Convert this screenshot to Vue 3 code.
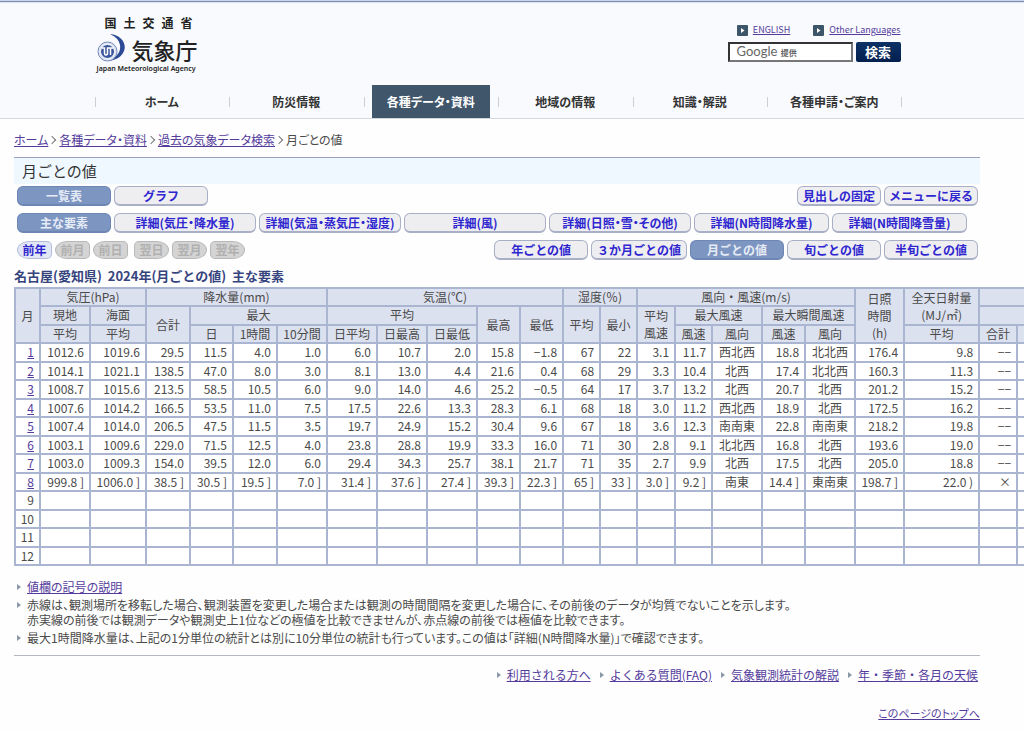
<script setup>
const nav = ['ホーム', '防災情報', '各種データ・資料', '地域の情報', '知識・解説', '各種申請・ご案内']

const elements = [
  { label: '主な要素', size: 'short', on: true },
  { label: '詳細(気圧・降水量)', size: 'long' },
  { label: '詳細(気温・蒸気圧・湿度)', size: 'long' },
  { label: '詳細(風)', size: 'long' },
  { label: '詳細(日照・雪・その他)', size: 'long' },
  { label: '詳細(N時間降水量)', size: 'mid' },
  { label: '詳細(N時間降雪量)', size: 'mid' },
]

const periods = [
  { label: '年ごとの値', size: 'short' },
  { label: '３か月ごとの値', size: 'fit' },
  { label: '月ごとの値', size: 'short', on: true },
  { label: '旬ごとの値', size: 'short' },
  { label: '半旬ごとの値', size: 'short' },
]

const widths = [25, 50, 56, 44, 43, 44, 50, 50, 50, 50, 43, 43, 37, 37, 38, 37, 50, 43, 50, 49, 75, 38, 50]

const rows = [
  ['1012.6', '1019.6', '29.5', '11.5', '4.0', '1.0', '6.0', '10.7', '2.0', '15.8', '−1.8', '67', '22', '3.1', '11.7', '西北西', '18.8', '北北西', '176.4', '9.8', '−−', ''],
  ['1014.1', '1021.1', '138.5', '47.0', '8.0', '3.0', '8.1', '13.0', '4.4', '21.6', '0.4', '68', '29', '3.3', '10.4', '北西', '17.4', '北北西', '160.3', '11.3', '−−', ''],
  ['1008.7', '1015.6', '213.5', '58.5', '10.5', '6.0', '9.0', '14.0', '4.6', '25.2', '−0.5', '64', '17', '3.7', '13.2', '北西', '20.7', '北西', '201.2', '15.2', '−−', ''],
  ['1007.6', '1014.2', '166.5', '53.5', '11.0', '7.5', '17.5', '22.6', '13.3', '28.3', '6.1', '68', '18', '3.0', '11.2', '西北西', '18.9', '北西', '172.5', '16.2', '−−', ''],
  ['1007.4', '1014.0', '206.5', '47.5', '11.5', '3.5', '19.7', '24.9', '15.2', '30.4', '9.6', '67', '18', '3.6', '12.3', '南南東', '22.8', '南南東', '218.2', '19.8', '−−', ''],
  ['1003.1', '1009.6', '229.0', '71.5', '12.5', '4.0', '23.8', '28.8', '19.9', '33.3', '16.0', '71', '30', '2.8', '9.1', '北北西', '16.8', '北西', '193.6', '19.0', '−−', ''],
  ['1003.0', '1009.3', '154.0', '39.5', '12.0', '6.0', '29.4', '34.3', '25.7', '38.1', '21.7', '71', '35', '2.7', '9.9', '北西', '17.5', '北西', '205.0', '18.8', '−−', ''],
  ['999.8 ]', '1006.0 ]', '38.5 ]', '30.5 ]', '19.5 ]', '7.0 ]', '31.4 ]', '37.6 ]', '27.4 ]', '39.3 ]', '22.3 ]', '65 ]', '33 ]', '3.0 ]', '9.2 ]', '南東', '14.4 ]', '東南東', '198.7 ]', '22.0 )', '×', ''],
  Array(22).fill(''),
  Array(22).fill(''),
  Array(22).fill(''),
  Array(22).fill(''),
]

const footerLinks = ['利用される方へ', 'よくある質問(FAQ)', '気象観測統計の解説', '年・季節・各月の天候']
</script>

<template>
  <div class="page">
    <header class="header">
      <div class="header-inner">
        <div class="masthead">
          <a class="logo" href="#">
            <span class="ministry"><span>国</span><span>土</span><span>交</span><span>通</span><span>省</span></span>
            <span class="agency">
              <svg class="emblem" viewBox="0 0 30 28" aria-hidden="true">
                <path d="M13 0C25 1 31 11 26 19C23 24 18 26 12 27C20 23 24 18 23 11C22 6 19 3 13 0Z" fill="#2c4a96" />
                <circle cx="10.500" cy="17.500" r="9.500" fill="#dfe6f3" stroke="#7487b8" stroke-width="1" />
                <circle cx="10.500" cy="17.500" r="7" fill="#3a559d" stroke="#fff" stroke-width="1" />
                <path d="M4.500 14H7.500V19C7.500 21.500 10.500 21.500 10.500 19V14H13.500V21M13.500 14H16.500" fill="none" stroke="#fff" stroke-width="1.500" />
              </svg>
              <span>気象庁</span>
            </span>
            <span class="english">Japan Meteorological Agency</span>
          </a>
          <div class="tools">
            <div class="langs">
              <a v-for="l in ['ENGLISH', 'Other Languages']" :key="l" href="#">
                <svg viewBox="0 0 11 11" aria-hidden="true">
                  <rect width="11" height="11" rx="1" fill="#3d5568" />
                  <path d="M4 3L7.500 5.500L4 8Z" fill="#fff" />
                </svg>
                <span>{{ l }}</span>
              </a>
            </div>
            <form class="search" @submit.prevent>
              <span class="field">
                <input id="q" type="text" />
                <label for="q">Google <small>提供</small></label>
              </span>
              <button type="submit">検索</button>
            </form>
          </div>
        </div>
        <nav class="nav">
          <div v-for="(n, i) in nav" :key="n" class="nav-item">
            <a href="#" :class="{ current: i === 2 }">{{ n }}</a>
          </div>
        </nav>
      </div>
    </header>

    <main class="main">
      <div class="crumbs">
        <a href="#">ホーム</a><i></i><a href="#">各種データ・資料</a><i></i><a href="#">過去の気象データ検索</a><i></i><span>月ごとの値</span>
      </div>
      <h1>月ごとの値</h1>

      <div class="controls">
        <div class="bar">
          <div class="group">
            <button class="btn short on">一覧表</button>
            <button class="btn short">グラフ</button>
          </div>
          <div class="group">
            <button class="btn fit">見出しの固定</button>
            <button class="btn short">メニューに戻る</button>
          </div>
        </div>
        <div class="bar">
          <div class="group">
            <button v-for="e in elements" :key="e.label" class="btn" :class="[e.size, { on: e.on }]">{{ e.label }}</button>
          </div>
        </div>
        <div class="bar">
          <div class="steps">
            <div class="group">
              <button class="step prev">前年</button>
              <button class="step prev" disabled>前月</button>
              <button class="step prev" disabled>前日</button>
            </div>
            <div class="group">
              <button class="step next" disabled>翌日</button>
              <button class="step next" disabled>翌月</button>
              <button class="step next" disabled>翌年</button>
            </div>
          </div>
          <div class="group">
            <button v-for="p in periods" :key="p.label" class="btn" :class="[p.size, { on: p.on }]">{{ p.label }}</button>
          </div>
        </div>
      </div>

      <h2>名古屋(愛知県)&nbsp; 2024年(月ごとの値)&nbsp; 主な要素</h2>
      <div class="table-wrap">
        <table>
          <colgroup>
            <col v-for="(w, i) in widths" :key="i" :style="{ width: w + 'px' }" />
          </colgroup>
          <thead>
            <tr>
              <th rowspan="3">月</th>
              <th colspan="2">気圧(hPa)</th>
              <th colspan="4">降水量(mm)</th>
              <th colspan="5">気温(℃)</th>
              <th colspan="2">湿度(％)</th>
              <th colspan="5">風向・風速(m/s)</th>
              <th rowspan="3">日照<br />時間<br />(h)</th>
              <th rowspan="2">全天日射量<br />(MJ/㎡)</th>
              <th colspan="2"></th>
            </tr>
            <tr>
              <th>現地</th>
              <th>海面</th>
              <th rowspan="2">合計</th>
              <th colspan="3">最大</th>
              <th colspan="3">平均</th>
              <th rowspan="2">最高</th>
              <th rowspan="2">最低</th>
              <th rowspan="2">平均</th>
              <th rowspan="2">最小</th>
              <th rowspan="2">平均<br />風速</th>
              <th colspan="2">最大風速</th>
              <th colspan="2">最大瞬間風速</th>
              <th colspan="2"></th>
            </tr>
            <tr>
              <th>平均</th>
              <th>平均</th>
              <th>日</th>
              <th>1時間</th>
              <th>10分間</th>
              <th>日平均</th>
              <th>日最高</th>
              <th>日最低</th>
              <th>風速</th>
              <th>風向</th>
              <th>風速</th>
              <th>風向</th>
              <th>平均</th>
              <th>合計</th>
              <th></th>
            </tr>
          </thead>
          <tbody>
            <tr v-for="(r, i) in rows" :key="i">
              <td><a v-if="i < 8" href="#">{{ i + 1 }}</a><template v-else>{{ i + 1 }}</template></td>
              <td v-for="(c, j) in r" :key="j" :class="{ dir: j === 15 || j === 17 }">{{ c }}</td>
            </tr>
          </tbody>
        </table>
      </div>

      <ul class="notes">
        <li><a href="#">値欄の記号の説明</a></li>
        <li>赤線は、観測場所を移転した場合、観測装置を変更した場合または観測の時間間隔を変更した場合に、その前後のデータが均質でないことを示します。<br />赤実線の前後では観測データや観測史上1位などの極値を比較できませんが、赤点線の前後では極値を比較できます。</li>
        <li>最大1時間降水量は、上記の1分単位の統計とは別に10分単位の統計も行っています。この値は「詳細(N時間降水量)」で確認できます。</li>
      </ul>

      <ul class="links">
        <li v-for="l in footerLinks" :key="l"><a href="#">{{ l }}</a></li>
      </ul>
      <p class="top"><a href="#">このページのトップへ</a></p>
    </main>
  </div>
</template>

<style>
body {
  margin: 0;
  background: #fefefe;
}
</style>

<style scoped>
* {
  box-sizing: border-box;
}
.page {
  font-family: "Noto Sans CJK JP", "Liberation Sans", sans-serif;
  font-size: 12px;
  line-height: 16px;
  color: #4a4a4a;
  overflow: hidden;
}
a {
  color: #553c9c;
}
button {
  font: inherit;
  padding: 0;
  cursor: pointer;
}
.header {
  background: #f8fafd;
  border-bottom: 1px solid #d4d8dc;
  padding-right: 28px;
}
.header::before {
  content: "";
  display: block;
  height: 3px;
  margin-right: -28px;
  background: linear-gradient(#c9d4e8 1px, #7f8db3 1px, #7f8db3 2px, #dde2ec 2px);
}
.header-inner {
  max-width: 807px;
  margin: 0 auto;
}
.masthead {
  display: flex;
  justify-content: space-between;
  height: 82px;
}
.logo {
  display: flex;
  flex-direction: column;
  width: 103px;
  padding: 12px 0 0 2px;
  color: #222;
  text-decoration: none;
}
.ministry {
  display: flex;
  justify-content: space-between;
  padding: 0 5px 0 8px;
  font-weight: 700;
}
.agency {
  display: flex;
  justify-content: space-between;
  font-size: 22px;
  line-height: 36px;
  font-weight: 500;
  height: 32px;
}
.emblem {
  width: 30px;
  height: 28px;
  margin-top: 3px;
}
.english {
  font-family: "Noto Sans", sans-serif;
  font-size: 7px;
  line-height: 12px;
  font-weight: 600;
  white-space: nowrap;
}
.tools {
  display: flex;
  flex-direction: column;
  align-items: flex-end;
  gap: 4px;
  padding: 19px 1px 0 0;
}
.langs {
  display: flex;
  gap: 23px;
  font-size: 9px;
}
.langs a {
  display: flex;
  align-items: center;
  gap: 5px;
}
.langs svg {
  width: 11px;
  height: 11px;
}
.search {
  display: flex;
  gap: 3px;
}
.field {
  position: relative;
}
.field input {
  display: block;
  width: 125px;
  height: 20px;
  padding: 0 8px;
  border: 2px solid #555;
  border-color: #333 #777 #777 #333;
  background: #fff;
  font: inherit;
}
.field label {
  position: absolute;
  left: 9px;
  top: 1px;
  color: #666;
  font-family: Lato, "Noto Sans CJK JP", sans-serif;
  font-size: 13px;
}
.field small {
  font-size: 8px;
  font-weight: 700;
}
.search button {
  width: 45px;
  height: 20px;
  border: 0;
  border-radius: 2px;
  background: linear-gradient(#0d3166, #03204e);
  color: #fff;
  font-size: 13px;
  font-weight: 700;
  line-height: 18px;
}
.nav {
  display: grid;
  grid-template-columns: repeat(6, 1fr);
}
.nav-item {
  display: flex;
  padding: 0 8px;
  background: linear-gradient(#ccd0d4, #ccd0d4) 0 12px / 1px 10px no-repeat;
}
.nav-item:last-child {
  background: linear-gradient(#ccd0d4, #ccd0d4) 0 12px / 1px 10px no-repeat, linear-gradient(#ccd0d4, #ccd0d4) 100% 12px / 1px 10px no-repeat;
}
.nav a {
  flex: 1;
  text-align: center;
  line-height: 33px;
  font-weight: 700;
  font-feature-settings: "palt";
  color: #333;
  text-decoration: none;
}
.nav a.current {
  background: #40566a;
  color: #fff;
}
.main {
  margin: 0 44px 0 14px;
}
.crumbs {
  display: flex;
  align-items: center;
  padding: 13px 0 9px;
  font-feature-settings: "palt";
}
.crumbs i {
  width: 6px;
  height: 6px;
  margin: 0 4px 0 1px;
  border: solid #777;
  border-width: 1px 1px 0 0;
  transform: rotate(45deg);
}
h1 {
  margin: 0;
  padding: 0 8px;
  border-top: 1px solid #97a1bb;
  background: #eff7ff;
  font-size: 15px;
  line-height: 26px;
  font-weight: 400;
  color: #333;
}
.controls {
  display: flex;
  flex-direction: column;
  gap: 7px;
  padding: 2px 2px 0 3px;
}
.bar {
  display: flex;
  justify-content: space-between;
  height: 20px;
}
.group {
  display: flex;
  gap: 3px;
}
.btn {
  height: 20px;
  border: 1px solid #a9afc6;
  border-bottom-width: 2px;
  border-radius: 6px;
  background: #eeeef1;
  color: #2f26cf;
  font-weight: 700;
  line-height: 16px;
  white-space: nowrap;
}
.btn.on {
  background: #7d95c1;
  border-color: #6e86b4;
  color: #e6ecf6;
}
.short {
  width: 94px;
}
.long {
  width: 142px;
  font-feature-settings: "palt";
}
.mid {
  width: 135px;
}
.fit {
  padding: 0 5px;
}
.steps {
  display: flex;
  align-items: center;
  gap: 6px;
}
.step {
  width: 35px;
  height: 18px;
  border: 1px solid #b8b8b8;
  background: #d4d4d4;
  color: #b0b0b0;
  font-weight: 700;
  line-height: 14px;
}
.step:enabled {
  border-color: #b4bcd8;
  background: #e2e7f5;
  color: #2f26cf;
}
.prev {
  border-radius: 12px 5px 5px 12px / 9px 5px 5px 9px;
}
.next {
  border-radius: 5px 12px 12px 5px / 5px 9px 9px 5px;
}
h2 {
  margin: 8px 0 3px;
  font-size: 13px;
  line-height: 16px;
  font-weight: 700;
  color: #36447e;
}
.table-wrap {
  margin-right: -44px;
  overflow: hidden;
}
table {
  width: 1052px;
  table-layout: fixed;
  border-collapse: collapse;
}
th,
td {
  height: 18px;
  padding: 0 0 1px;
  border: 2px solid #a9b5d1;
  line-height: 14px;
  font-weight: 400;
  white-space: nowrap;
}
tbody tr:nth-child(odd) > *,
thead tr:nth-child(2) > * {
  height: 19px;
}
th {
  background: #dce1ef;
}
th[rowspan] {
  line-height: 17px;
}
td {
  padding-right: 5px;
  background: #fff;
  text-align: right;
}
td.dir {
  padding-right: 0;
  text-align: center;
}
ul {
  margin: 0;
  padding: 0;
  list-style: none;
}
li {
  position: relative;
}
li::before {
  content: "";
  position: absolute;
  left: 3px;
  top: 5px;
  border: solid transparent;
  border-width: 3px 0 3px 4px;
  border-left-color: #8b98a8;
}
.notes {
  display: flex;
  flex-direction: column;
  gap: 3px;
  padding: 13px 0 10px;
  border-bottom: 1px solid #b4b8c0;
  line-height: 15px;
  font-feature-settings: "palt";
}
.notes li {
  padding-left: 13px;
  white-space: nowrap;
}
.links {
  display: flex;
  justify-content: flex-end;
  gap: 6px;
  padding: 11px 2px 0 0;
}
.links li {
  padding-left: 13px;
}
.top {
  margin: 22px 0 0;
  text-align: right;
  font-size: 11px;
  font-feature-settings: "palt";
}
</style>
